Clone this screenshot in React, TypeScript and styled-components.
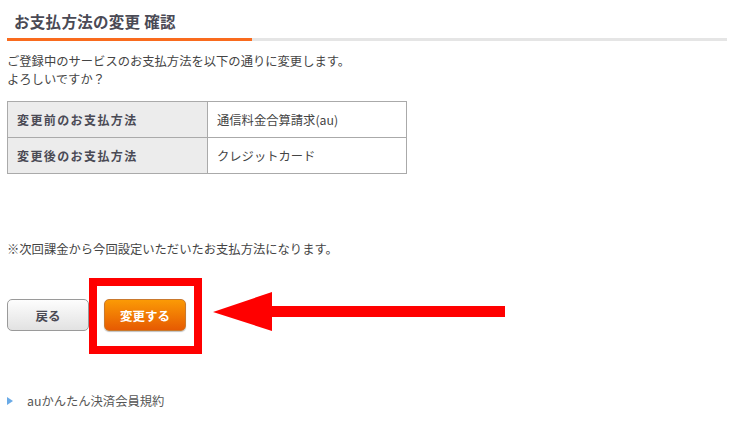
import React from "react";
import styled, { createGlobalStyle } from "styled-components";

const Global = createGlobalStyle`
  html, body { margin: 0; padding: 0; background: #fff; }
  body {
    font-family: "Noto Sans CJK JP", "Noto Sans", sans-serif;
    color: #444;
    font-size: 12px;
  }
`;

const Page = styled.div`
  width: 732px;
  height: 444px;
  box-sizing: border-box;
  padding: 9px 5px 0 7px;
  position: relative;
  overflow: hidden;
`;

const Heading = styled.h1`
  margin: 0;
  padding: 0 0 4px 7px;
  font-size: 15.5px;
  line-height: 25px;
  font-weight: bold;
  color: #4a4a55;
  letter-spacing: 0.3px;
`;

const Rule = styled.div`
  display: flex;
  height: 3px;
  width: 720px;
`;

const RuleAccent = styled.div`
  width: 245px;
  background: #f96b1e;
`;

const RuleRest = styled.div`
  flex: 1;
  background: #e5e5e5;
`;

const Lead = styled.p`
  margin: 11px 0 0;
  line-height: 18px;
  font-size: 12.3px;
  color: #444;
`;

const Table = styled.table`
  margin-top: 13px;
  border-collapse: collapse;
  width: 400px;
`;

const HeadCell = styled.th`
  width: 200px;
  height: 36px;
  box-sizing: border-box;
  padding: 0 0 0 9px;
  border: 1px solid #aaa;
  background: #ececec;
  text-align: left;
  font-weight: bold;
  font-size: 12px;
  letter-spacing: 1.4px;
  color: #4a4a55;
`;

const ValueCell = styled.td`
  height: 36px;
  box-sizing: border-box;
  padding: 0 0 0 9px;
  border: 1px solid #aaa;
  font-size: 12.3px;
  color: #444;
`;

const Note = styled.p`
  margin: 66px 0 0;
  line-height: 18px;
  font-size: 12.3px;
  color: #444;
`;

const ActionArea = styled.div`
  position: relative;
  margin-top: 41px;
  display: flex;
  gap: 15px;
  align-items: center;
`;

const Button = styled.button<{ $primary?: boolean }>`
  width: 82px;
  height: 32px;
  border-radius: 5px;
  font-family: inherit;
  font-size: 12.5px;
  font-weight: bold;
  cursor: pointer;
  padding: 0;
  color: ${(p) => (p.$primary ? "#fff" : "#4a4a55")};
  border: 1px solid ${(p) => (p.$primary ? "#c9792e" : "#9a9a9a")};
  background: ${(p) =>
    p.$primary
      ? "linear-gradient(#fb9a05, #e65a02)"
      : "linear-gradient(#fdfdfd, #e2e2e2)"};
  box-shadow: ${(p) => (p.$primary ? "0 1px 1px rgba(0,0,0,0.25)" : "none")};
`;

/* red highlight frame around the confirm button */
const Frame = styled.div`
  position: absolute;
  left: 82px;
  top: -21px;
  width: 113px;
  height: 76px;
  box-sizing: border-box;
  border: 8px solid #ff0000;
  pointer-events: none;
`;

const Pointer = styled.svg`
  position: absolute;
  left: 206px;
  top: -7px;
`;

const Links = styled.ul`
  list-style: none;
  margin: 61px 0 0;
  padding: 0;
`;

const LinkItem = styled.li`
  display: flex;
  align-items: center;
  gap: 14px;
  font-size: 12.3px;
  line-height: 18px;
  color: #555;
`;

const Bullet = styled.span`
  width: 0;
  height: 0;
  border-top: 4px solid transparent;
  border-bottom: 4px solid transparent;
  border-left: 6px solid #6aaae6;
`;

export default function App() {
  return (
    <>
      <Global />
      <Page>
        <Heading>お支払方法の変更 確認</Heading>
        <Rule>
          <RuleAccent />
          <RuleRest />
        </Rule>
        <Lead>
          ご登録中のサービスのお支払方法を以下の通りに変更します。
          <br />
          よろしいですか？
        </Lead>
        <Table>
          <tbody>
            <tr>
              <HeadCell>変更前のお支払方法</HeadCell>
              <ValueCell>通信料金合算請求(au)</ValueCell>
            </tr>
            <tr>
              <HeadCell>変更後のお支払方法</HeadCell>
              <ValueCell>クレジットカード</ValueCell>
            </tr>
          </tbody>
        </Table>
        <Note>※次回課金から今回設定いただいたお支払方法になります。</Note>
        <ActionArea>
          <Button>戻る</Button>
          <Button $primary>変更する</Button>
          <Frame />
          <Pointer width="300" height="42" viewBox="0 0 300 42">
            <polygon points="0,20 59,0 59,14 292,14 292,25 59,25 59,39" fill="#ff0000" />
          </Pointer>
        </ActionArea>
        <Links>
          <LinkItem>
            <Bullet />
            auかんたん決済会員規約
          </LinkItem>
        </Links>
      </Page>
    </>
  );
}
